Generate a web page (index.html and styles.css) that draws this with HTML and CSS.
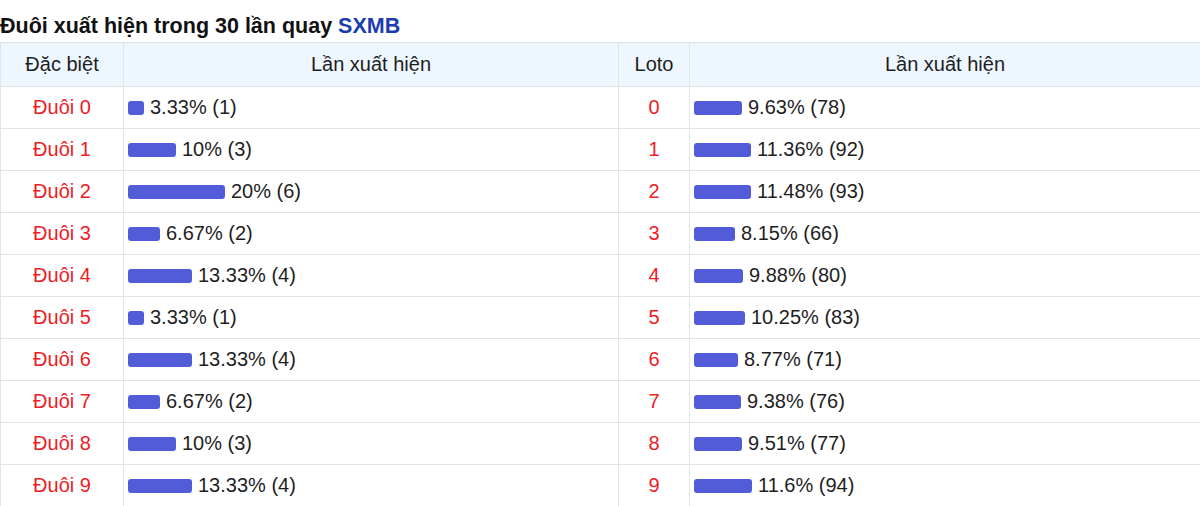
FILE: index.html
```html
<!DOCTYPE html>
<html lang="vi">
<head>
<meta charset="utf-8">
<title>Đuôi xuất hiện trong 30 lần quay SXMB</title>
<link rel="stylesheet" href="styles.css">
</head>
<body>
<h2 class="title">Đuôi xuất hiện trong 30 lần quay <span class="brand">SXMB</span></h2>
<table class="stats">
  <colgroup>
    <col class="c1"><col class="c2"><col class="c3"><col class="c4">
  </colgroup>
  <thead>
    <tr><th>Đặc biệt</th><th>Lần xuất hiện</th><th>Loto</th><th>Lần xuất hiện</th></tr>
  </thead>
  <tbody>
    <tr><td class="label">Đuôi 0</td><td><div class="cell"><span class="bar" style="width:16px"></span>3.33% (1)</div></td><td class="label">0</td><td><div class="cell"><span class="bar" style="width:48px"></span>9.63% (78)</div></td></tr>
    <tr><td class="label">Đuôi 1</td><td><div class="cell"><span class="bar" style="width:48px"></span>10% (3)</div></td><td class="label">1</td><td><div class="cell"><span class="bar" style="width:57px"></span>11.36% (92)</div></td></tr>
    <tr><td class="label">Đuôi 2</td><td><div class="cell"><span class="bar" style="width:97px"></span>20% (6)</div></td><td class="label">2</td><td><div class="cell"><span class="bar" style="width:57px"></span>11.48% (93)</div></td></tr>
    <tr><td class="label">Đuôi 3</td><td><div class="cell"><span class="bar" style="width:32px"></span>6.67% (2)</div></td><td class="label">3</td><td><div class="cell"><span class="bar" style="width:41px"></span>8.15% (66)</div></td></tr>
    <tr><td class="label">Đuôi 4</td><td><div class="cell"><span class="bar" style="width:64px"></span>13.33% (4)</div></td><td class="label">4</td><td><div class="cell"><span class="bar" style="width:49px"></span>9.88% (80)</div></td></tr>
    <tr><td class="label">Đuôi 5</td><td><div class="cell"><span class="bar" style="width:16px"></span>3.33% (1)</div></td><td class="label">5</td><td><div class="cell"><span class="bar" style="width:51px"></span>10.25% (83)</div></td></tr>
    <tr><td class="label">Đuôi 6</td><td><div class="cell"><span class="bar" style="width:64px"></span>13.33% (4)</div></td><td class="label">6</td><td><div class="cell"><span class="bar" style="width:44px"></span>8.77% (71)</div></td></tr>
    <tr><td class="label">Đuôi 7</td><td><div class="cell"><span class="bar" style="width:32px"></span>6.67% (2)</div></td><td class="label">7</td><td><div class="cell"><span class="bar" style="width:47px"></span>9.38% (76)</div></td></tr>
    <tr><td class="label">Đuôi 8</td><td><div class="cell"><span class="bar" style="width:48px"></span>10% (3)</div></td><td class="label">8</td><td><div class="cell"><span class="bar" style="width:48px"></span>9.51% (77)</div></td></tr>
    <tr><td class="label">Đuôi 9</td><td><div class="cell"><span class="bar" style="width:64px"></span>13.33% (4)</div></td><td class="label">9</td><td><div class="cell"><span class="bar" style="width:58px"></span>11.6% (94)</div></td></tr>
  </tbody>
</table>
</body>
</html>
```

FILE: styles.css
```css
html, body {
  margin: 0;
  padding: 0;
  background: #ffffff;
}
body {
  font-family: "Liberation Sans", Arial, sans-serif;
  color: #1a1a1a;
}
.title {
  margin: 0;
  padding: 13px 0 0 0;
  height: 29px;
  font-size: 21.5px;
  line-height: 26px;
  font-weight: bold;
  color: #111111;
}
.brand {
  color: #1c3db0;
}
.stats {
  width: 1200px;
  border-collapse: collapse;
  table-layout: fixed;
  font-size: 20px;
}
.c1 { width: 123px; }
.c2 { width: 495px; }
.c3 { width: 71px; }
.c4 { width: 511px; }
.stats th,
.stats td {
  border: 1px solid #e2e4e8;
  padding: 0 4px;
  height: 42px;
  box-sizing: border-box;
}
.stats th {
  height: 44px;
  background: #eef6ff;
  font-weight: normal;
  color: #1e1e1e;
  text-align: center;
}
.stats td.label {
  text-align: center;
  color: #ee1c25;
}
.cell {
  display: flex;
  align-items: center;
  gap: 6px;
  color: #1e1e1e;
}
.bar {
  display: inline-block;
  height: 14px;
  background: #525bd8;
  border-radius: 3px;
}
```
